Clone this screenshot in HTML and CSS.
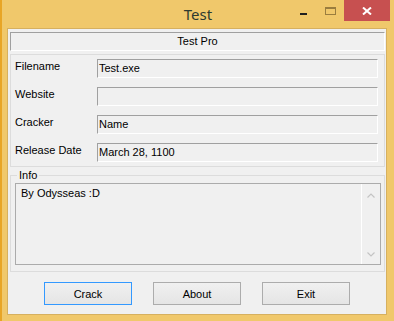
FILE: index.html
```html
<!DOCTYPE html>
<html lang="en">
<head>
    <meta charset="UTF-8">
    <meta name="viewport" content="width=device-width, initial-scale=1.0">
    <title>Test</title>
    <link rel="stylesheet" href="styles.css">
</head>
<body>
    <div class="window">
        <div class="titlebar">
            <span></span>
            <span class="title">Test</span>
            <div class="controls">
                <span class="ctl ctl-min"><span class="dash"></span></span>
                <span class="ctl ctl-max"><span class="square"></span></span>
                <span class="ctl ctl-close">
                    <svg width="10" height="8" viewBox="0 0 10 8">
                        <path d="M1 0.5 L9 7.5 M9 0.5 L1 7.5" stroke="#fff" stroke-width="2" fill="none"/>
                    </svg>
                </span>
            </div>
        </div>
        <div class="client">
            <div class="header-box">Test Pro</div>
            <fieldset class="group details">
                <div class="row">
                    <label for="filename">Filename</label>
                    <div class="field" id="filename">Test.exe</div>
                </div>
                <div class="row">
                    <label for="website">Website</label>
                    <div class="field" id="website"></div>
                </div>
                <div class="row">
                    <label for="cracker">Cracker</label>
                    <div class="field" id="cracker">Name</div>
                </div>
                <div class="row">
                    <label for="releaseDate">Release Date</label>
                    <div class="field" id="releaseDate">March 28, 1100</div>
                </div>
            </fieldset>
            <fieldset class="group info">
                <legend>Info</legend>
                <div class="memo">
                    <div class="memo-text">By Odysseas :D</div>
                    <div class="scrollbar">
                        <svg width="8" height="5" viewBox="0 0 8 5"><path d="M0.5 4.5 L4 1 L7.5 4.5" stroke="#c4c4c4" stroke-width="1.2" fill="none"/></svg>
                        <svg width="8" height="5" viewBox="0 0 8 5"><path d="M0.5 0.5 L4 4 L7.5 0.5" stroke="#c4c4c4" stroke-width="1.2" fill="none"/></svg>
                    </div>
                </div>
            </fieldset>
            <div class="buttons">
                <button class="default">Crack</button>
                <button class="about">About</button>
                <button class="exit">Exit</button>
            </div>
        </div>
    </div>
</body>
</html>
```

FILE: styles.css
```css
body {
    margin: 0;
    padding: 0;
    font-family: 'Liberation Sans', Arial, sans-serif;
    font-size: 11px;
    color: #000;
}

.window {
    width: 394px;
    height: 321px;
    box-sizing: border-box;
    display: flex;
    flex-direction: column;
    background-color: #f0c86b;
    border-left: 2px solid #e8a526;
}

.titlebar {
    height: 28px;
    display: grid;
    grid-template-columns: 1fr auto 1fr;
    flex-shrink: 0;
}

.title {
    font-family: 'Noto Sans', sans-serif;
    font-size: 15px;
    line-height: 28px;
    color: #2d3a30;
}

.controls {
    justify-self: end;
    display: flex;
    align-items: flex-start;
    margin-right: 4px;
}

.ctl {
    display: flex;
    justify-content: center;
    height: 21px;
    box-sizing: border-box;
}

.ctl-min {
    width: 27px;
    padding-top: 13px;
}

.ctl-min .dash {
    width: 7px;
    height: 2px;
    background-color: #1f1f1f;
}

.ctl-max {
    width: 27px;
    padding-top: 7px;
}

.ctl-max .square {
    width: 11px;
    height: 8px;
    box-sizing: border-box;
    border: 1px solid #9a7d3e;
    border-top-width: 2px;
}

.ctl-close {
    width: 46px;
    align-items: center;
    background-color: #c75050;
}

.client {
    flex: 1;
    margin: 0 7px 6px 5px;
    border: 1px solid #d6b05f;
    background-color: #f0f0f0;
    padding: 3px 1px 0 2px;
    display: flex;
    flex-direction: column;
}

.header-box {
    height: 19px;
    box-sizing: border-box;
    border-top: 1px solid #a0a0a0;
    border-left: 1px solid #a0a0a0;
    border-bottom: 1px solid #fff;
    border-right: 1px solid #fff;
    text-align: center;
    line-height: 17px;
}

.group {
    margin: 0;
    min-inline-size: 0;
    border: 1px solid #dcdcdc;
}

.details {
    margin-top: 3px;
    padding: 4px 0 4px 4px;
    display: flex;
    flex-direction: column;
    gap: 9px;
}

.row {
    display: flex;
    align-items: flex-start;
    height: 19px;
}

.row label {
    width: 82px;
    line-height: 15px;
}

.field {
    width: 281px;
    height: 19px;
    box-sizing: border-box;
    border-top: 1px solid #a0a0a0;
    border-left: 1px solid #a0a0a0;
    border-bottom: 1px solid #fff;
    border-right: 1px solid #fff;
    padding-left: 1px;
    line-height: 17px;
}

.info {
    margin-top: 2px;
    padding: 1px 3px 6px 4px;
}

.info legend {
    padding: 0 2px;
    margin-left: 2px;
    line-height: 13px;
}

.memo {
    height: 82px;
    box-sizing: border-box;
    border: 1px solid #ababab;
    display: flex;
}

.memo-text {
    flex: 1;
    padding: 3px 0 0 5px;
    line-height: 13px;
}

.scrollbar {
    width: 18px;
    border-left: 1px solid #fff;
    display: flex;
    flex-direction: column;
    justify-content: space-between;
    align-items: center;
    padding: 9px 0 7px;
}

.buttons {
    margin-top: 10px;
    padding-left: 34px;
    display: flex;
    gap: 21px;
}

button {
    width: 88px;
    height: 23px;
    border: 1px solid #acacac;
    background: linear-gradient(#f0f0f0, #e5e5e5);
    font-family: 'Liberation Sans', Arial, sans-serif;
    font-size: 11px;
    color: #000;
    padding: 0;
}

button.default {
    border-color: #3399ff;
}
```
